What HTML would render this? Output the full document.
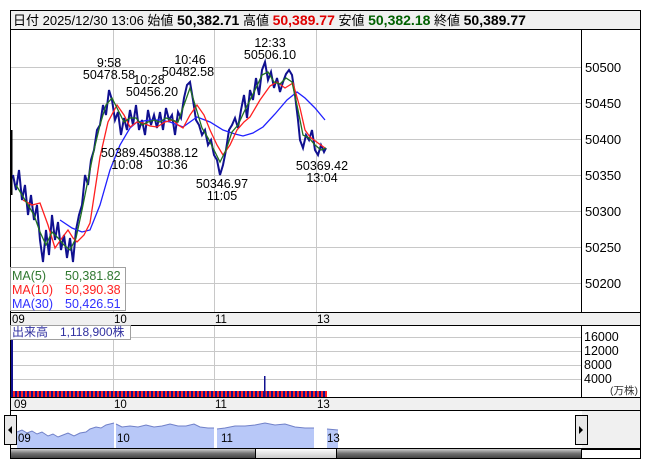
<!DOCTYPE html>
<html><head><meta charset="utf-8"><style>
body{margin:0;background:#fff;width:653px;height:470px;overflow:hidden;font-family:"Liberation Sans","Noto Sans CJK JP",sans-serif}
svg{position:absolute;left:0;top:0}
text{font-family:"Liberation Sans","Noto Sans CJK JP",sans-serif}
</style></head><body>
<svg width="653" height="470" viewBox="0 0 653 470">
<defs>
<linearGradient id="sb" x1="0" y1="0" x2="0" y2="1"><stop offset="0" stop-color="#d8d8d8"/><stop offset="0.5" stop-color="#707070"/><stop offset="1" stop-color="#404040"/></linearGradient>
<linearGradient id="th" x1="0" y1="0" x2="0" y2="1"><stop offset="0" stop-color="#fff"/><stop offset="1" stop-color="#c8c8c8"/></linearGradient>
</defs>
<!-- header -->
<rect x="10.5" y="10.5" width="630" height="19" fill="#f0f0f0" stroke="#000"/>
<text x="13" y="25" font-size="13" fill="#000">日付 2025/12/30 13:06 始値 <tspan font-weight="bold" font-size="14">50,382.71</tspan> 高値 <tspan font-weight="bold" font-size="14" fill="#e00000">50,389.77</tspan> 安値 <tspan font-weight="bold" font-size="14" fill="#006000">50,382.18</tspan> 終値 <tspan font-weight="bold" font-size="14">50,389.77</tspan></text>
<!-- main chart -->
<rect x="10.5" y="29.5" width="630" height="283" fill="#fff" stroke="#000"/>
<g stroke="#c8c8c8" stroke-width="1">
<line x1="11" y1="67.5" x2="581" y2="67.5"/><line x1="11" y1="103.5" x2="581" y2="103.5"/><line x1="11" y1="139.5" x2="581" y2="139.5"/><line x1="11" y1="175.5" x2="581" y2="175.5"/><line x1="11" y1="211.5" x2="581" y2="211.5"/><line x1="11" y1="247.5" x2="581" y2="247.5"/><line x1="11" y1="283.5" x2="581" y2="283.5"/>
<line x1="113.5" y1="30" x2="113.5" y2="312"/><line x1="214.5" y1="30" x2="214.5" y2="312"/><line x1="316.5" y1="30" x2="316.5" y2="312"/>
</g>
<line x1="581.5" y1="30" x2="581.5" y2="312" stroke="#000"/>
<g font-size="13" fill="#000">
<text x="585" y="72">50500</text><text x="585" y="108">50450</text><text x="585" y="144">50400</text><text x="585" y="180">50350</text><text x="585" y="216">50300</text><text x="585" y="252">50250</text><text x="585" y="288">50200</text>
</g>
<!-- price -->
<line x1="11.5" y1="130" x2="11.5" y2="195" stroke="#000" stroke-width="2"/>
<polyline fill="none" stroke="#101090" stroke-width="2" points="13,175 16,190 19,170 22,200 25,185 28,215 31,195 34,220 37,205 40,240 43,262 46,230 49,255 52,215 55,240 58,222 61,250 64,235 67,258 70,238 73,262 76,230 79,215 82,205 85,175 88,185 91,160 94,150 97,130 100,125 103,105 106,115 109,90 112,100 115,120 118,112 121,135 124,118 127,130 130,110 133,125 136,105 139,130 142,120 145,135 148,110 151,125 154,115 157,128 160,112 163,130 166,108 169,120 172,115 175,135 178,112 181,118 184,98 187,85 190,82 193,100 196,120 199,125 202,135 205,130 208,145 211,140 214,155 217,160 220,175 223,165 226,150 229,130 232,125 235,118 238,128 241,110 244,95 247,118 250,90 253,100 256,78 259,95 262,70 265,62 268,80 271,72 274,88 277,78 280,92 283,82 286,74 289,70 292,75 295,95 298,120 300,140 303,148 306,135 309,140 312,130 315,150 318,155 321,145 324,152 326,148"/>
<!-- MA30 blue -->
<polyline fill="none" stroke="#2020ff" stroke-width="1.3" points="60,220 72,228 82,232 90,230 100,205 110,170 120,145 130,128 137,122 150,120 160,120 170,122 183,127 197,117 210,122 223,130 235,134 243,136 253,133 263,127 275,114 287,100 297,92 305,98 315,108 325,120"/>
<!-- MA10 red -->
<polyline fill="none" stroke="#ff2020" stroke-width="1.3" points="23,200 32,205 40,203 48,225 55,248 62,238 68,230 73,238 77,242 84,235 90,223 95,190 100,157 108,122 117,105 124,115 130,127 137,122 143,123 150,126 157,127 165,122 173,120 178,125 183,128 190,115 197,105 204,115 210,130 217,145 223,155 230,145 237,130 244,122 250,117 260,100 270,86 277,82 285,88 293,83 300,108 305,130 310,137 318,143 325,148"/>
<!-- MA5 green -->
<polyline fill="none" stroke="#207020" stroke-width="1.3" points="16,185 22,195 28,205 34,215 40,232 46,245 52,232 58,238 64,245 70,250 76,238 82,210 88,180 94,150 100,125 106,105 112,98 118,110 124,122 130,118 136,118 142,125 148,122 154,120 160,122 166,118 172,120 178,122 184,105 190,88 196,108 202,128 208,138 214,150 220,162 226,150 232,132 238,125 244,112 250,100 256,88 262,75 268,72 274,82 280,84 286,78 292,82 298,110 303,135 309,138 315,145 321,150 326,148"/>
<!-- annotations -->
<g font-size="12.5" fill="#000" text-anchor="middle">
<text x="109" y="67">9:58</text><text x="109" y="79">50478.58</text>
<text x="149" y="84">10:28</text><text x="152" y="96">50456.20</text>
<text x="190" y="64">10:46</text><text x="188" y="76">50482.58</text>
<text x="270" y="47">12:33</text><text x="270" y="59">50506.10</text>
<text x="127" y="157">50389.45</text><text x="127" y="169">10:08</text>
<text x="172" y="157">50388.12</text><text x="172" y="169">10:36</text>
<text x="222" y="188">50346.97</text><text x="222" y="200">11:05</text>
<text x="322" y="170">50369.42</text><text x="322" y="182">13:04</text>
</g>
<!-- MA legend -->
<rect x="10.5" y="267.5" width="115" height="43" fill="#fff" fill-opacity="0.85" stroke="#a0a0a0"/>
<g font-size="12.5">
<text x="12" y="280" fill="#307830">MA(5)</text><text x="65" y="280" fill="#307830">50,381.82</text>
<text x="12" y="294" fill="#ff2020">MA(10)</text><text x="65" y="294" fill="#ff2020">50,390.38</text>
<text x="12" y="308" fill="#3030ff">MA(30)</text><text x="65" y="308" fill="#3030ff">50,426.51</text>
</g>
<!-- time axis 1 -->
<rect x="10.5" y="312.5" width="630" height="13" fill="#f0f0f0" stroke="#000"/>
<g font-size="11.5" fill="#000"><text x="12" y="323">09</text><text x="114" y="323">10</text><text x="215" y="323">11</text><text x="317" y="323">13</text></g>
<!-- volume -->
<rect x="10.5" y="325.5" width="630" height="72" fill="#fff" stroke="#000"/>
<g stroke="#c8c8c8"><line x1="11" y1="337.5" x2="581" y2="337.5"/><line x1="11" y1="351.5" x2="581" y2="351.5"/><line x1="11" y1="365.5" x2="581" y2="365.5"/><line x1="11" y1="379.5" x2="581" y2="379.5"/>
<line x1="113.5" y1="326" x2="113.5" y2="397"/><line x1="214.5" y1="326" x2="214.5" y2="397"/><line x1="316.5" y1="326" x2="316.5" y2="397"/></g>
<line x1="581.5" y1="326" x2="581.5" y2="397" stroke="#000"/>
<rect x="11" y="340" width="2" height="57" fill="#101090"/>
<rect x="13" y="391" width="314" height="6" fill="#101090"/>
<line x1="13" y1="394" x2="327" y2="394" stroke="#ff2020" stroke-width="6" stroke-dasharray="2,2"/>
<rect x="264" y="376" width="1.5" height="21" fill="#101090"/>
<g font-size="12.5" fill="#000"><text x="584" y="341">16000</text><text x="584" y="355">12000</text><text x="584" y="369">8000</text><text x="584" y="383">4000</text></g>
<text x="610" y="394" font-size="10.5" fill="#333">(万株)</text>
<rect x="10.5" y="325.5" width="120" height="14" fill="#fff" stroke="#a0a0a0"/>
<text x="12" y="336" font-size="12" fill="#3030a0">出来高　1,118,900株</text>
<!-- time axis 2 -->
<rect x="10.5" y="397.5" width="630" height="13" fill="#f0f0f0" stroke="#000"/>
<g font-size="11.5" fill="#000"><text x="14" y="408">09</text><text x="114" y="408">10</text><text x="215" y="408">11</text><text x="317" y="408">13</text></g>
<!-- navigator -->
<rect x="10.5" y="410.5" width="630" height="39" fill="#fff" stroke="#000"/>
<rect x="582" y="411" width="58" height="38" fill="#f0f0f0"/>
<polygon fill="#b8c8f8" stroke="none" points="17,448 17,432 22,430 27,433 32,431 37,434 42,432 48,436 53,434 58,437 63,435 68,433 74,436 80,433 86,432 90,429 96,427 101,428 106,425 110,424 114,423 114,448"/>
<polygon fill="#b8c8f8" points="116,448 116,424 122,427 130,426 138,427 146,425 154,427 162,426 170,424 178,426 186,426 194,424 200,427 208,428 214,428 214,448"/>
<polygon fill="#b8c8f8" points="217,448 217,429 225,428 235,426 245,426 255,425 265,423 275,425 285,424 295,427 305,428 314,428 314,448"/>
<polygon fill="#b8c8f8" points="327,448 327,429 338,430 338,448"/>
<polyline fill="none" stroke="#7080c8" stroke-width="1" points="17,432 22,430 27,433 32,431 37,434 42,432 48,436 53,434 58,437 63,435 68,433 74,436 80,433 86,432 90,429 96,427 101,428 106,425 110,424 114,423"/>
<polyline fill="none" stroke="#7080c8" points="116,424 122,427 130,426 138,427 146,425 154,427 162,426 170,424 178,426 186,426 194,424 200,427 208,428 214,428"/>
<polyline fill="none" stroke="#7080c8" points="217,429 225,428 235,426 245,426 255,425 265,423 275,425 285,424 295,427 305,428 314,428"/>
<polyline fill="none" stroke="#7080c8" points="327,429 338,430"/>
<g font-size="11.5" fill="#000"><text x="18" y="442">09</text><text x="117" y="442">10</text><text x="221" y="442">11</text><text x="327" y="442">13</text></g>
<rect x="4.5" y="415.5" width="12" height="29" fill="#e8e8e8" stroke="#000"/>
<polygon points="8,430 12,426 12,434" fill="#000"/>
<rect x="575.5" y="415.5" width="12" height="29" fill="#e8e8e8" stroke="#000"/>
<polygon points="583,430 579,426 579,434" fill="#000"/>
<rect x="10.5" y="448.5" width="571" height="10" fill="url(#sb)" stroke="#000"/>
<rect x="255.5" y="448.5" width="81" height="10" fill="url(#th)" stroke="#000"/>
<rect x="10.5" y="448.5" width="630" height="10" fill="none" stroke="#000"/>
</svg>
</body></html>
